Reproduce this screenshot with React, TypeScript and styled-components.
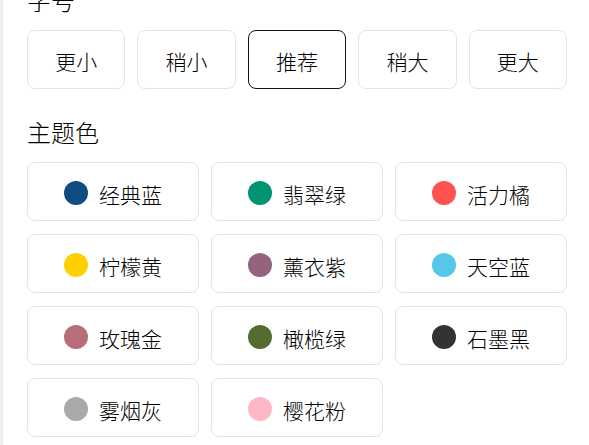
import React from "react";
import styled, { createGlobalStyle } from "styled-components";

const GlobalStyle = createGlobalStyle`
  html, body { margin: 0; padding: 0; background: #ffffff; }
  body { font-family: "Noto Sans CJK SC", "Noto Sans", sans-serif; color: #111111; }
`;

const Page = styled.div`
  display: flex;
  height: 100vh;
  overflow: hidden;
  background: #ffffff;
`;

const SideRail = styled.div`
  flex: 0 0 3px;
  background: #eceef1;
`;

const Content = styled.div`
  width: 540px;
  margin: -16px 0 0 24px;
  display: flex;
  flex-direction: column;
`;

const Section = styled.section`
  display: flex;
  flex-direction: column;
  & + & { margin-top: 27px; }
`;

const SectionTitle = styled.h2`
  margin: 0 0 14px;
  font-size: 24px;
  line-height: 32px;
  font-weight: 300;
  color: #000000;
`;

const SizeRow = styled.div`
  display: grid;
  grid-template-columns: repeat(5, 1fr);
  gap: 12px;
`;

const SizeButton = styled.button<{ $active?: boolean }>`
  height: 59px;
  box-sizing: border-box;
  border: 1px solid ${(p) => (p.$active ? "#111111" : "#e4e4e6")};
  border-radius: 8px;
  background: #ffffff;
  font-family: inherit;
  font-size: 21px;
  font-weight: 300;
  color: #000000;
  padding: 2px 0 0;
  cursor: pointer;
`;

const ColorGrid = styled.div`
  display: grid;
  grid-template-columns: repeat(3, 1fr);
  gap: 13px 12px;
`;

const ColorCard = styled.button`
  height: 59px;
  box-sizing: border-box;
  border: 1px solid #e4e4e6;
  border-radius: 8px;
  background: #ffffff;
  display: flex;
  align-items: center;
  justify-content: center;
  gap: 11px;
  padding: 4px 0 0;
  font-family: inherit;
  font-size: 21px;
  font-weight: 300;
  color: #000000;
  cursor: pointer;
`;

const Dot = styled.span<{ $color: string }>`
  width: 24px;
  height: 24px;
  border-radius: 50%;
  background: ${(p) => p.$color};
  flex: 0 0 24px;
  margin-top: -1px;
`;

const sizes = ["更小", "稍小", "推荐", "稍大", "更大"];
const colors: [string, string][] = [
  ["经典蓝", "#0f4c81"],
  ["翡翠绿", "#009473"],
  ["活力橘", "#ff5250"],
  ["柠檬黄", "#ffd000"],
  ["薰衣紫", "#94637e"],
  ["天空蓝", "#56c9eb"],
  ["玫瑰金", "#b76e79"],
  ["橄榄绿", "#556b2f"],
  ["石墨黑", "#333333"],
  ["雾烟灰", "#a9a9a9"],
  ["樱花粉", "#ffb7c5"],
];

export default function App() {
  return (
    <>
      <GlobalStyle />
      <Page>
        <SideRail />
        <Content>
          <Section>
            <SectionTitle>字号</SectionTitle>
            <SizeRow>
              {sizes.map((s) => (
                <SizeButton key={s} $active={s === "推荐"}>
                  {s}
                </SizeButton>
              ))}
            </SizeRow>
          </Section>
          <Section>
            <SectionTitle>主题色</SectionTitle>
            <ColorGrid>
              {colors.map(([name, c]) => (
                <ColorCard key={name}>
                  <Dot $color={c} />
                  <span>{name}</span>
                </ColorCard>
              ))}
            </ColorGrid>
          </Section>
        </Content>
      </Page>
    </>
  );
}
